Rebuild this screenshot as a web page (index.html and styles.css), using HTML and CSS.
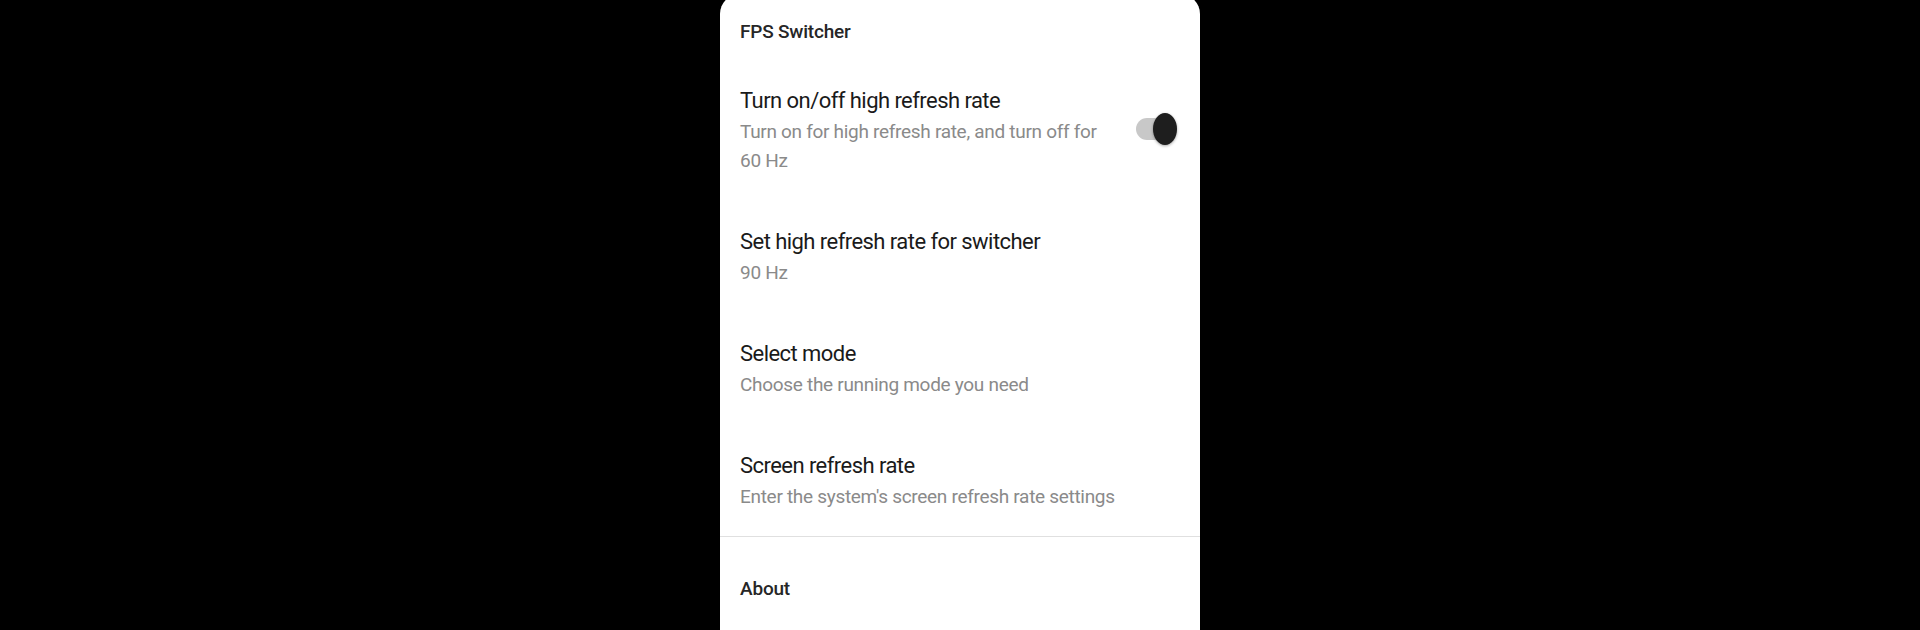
FILE: index.html
```html
<!DOCTYPE html>
<html lang="en">
<head>
<meta charset="utf-8">
<title>FPS Switcher</title>
<link rel="stylesheet" href="styles.css">
</head>
<body>
<main class="panel">
  <h2 class="section-title">FPS Switcher</h2>
  <div class="item">
    <div class="item-text item-text-narrow">
      <div class="item-title">Turn on/off high refresh rate</div>
      <div class="item-sub">Turn on for high refresh rate, and turn off for 60 Hz</div>
    </div>
    <div class="switch">
      <span class="switch-track"></span>
      <span class="switch-thumb"></span>
    </div>
  </div>
  <div class="item">
    <div class="item-text">
      <div class="item-title">Set high refresh rate for switcher</div>
      <div class="item-sub">90 Hz</div>
    </div>
  </div>
  <div class="item">
    <div class="item-text">
      <div class="item-title">Select mode</div>
      <div class="item-sub">Choose the running mode you need</div>
    </div>
  </div>
  <div class="item">
    <div class="item-text">
      <div class="item-title">Screen refresh rate</div>
      <div class="item-sub">Enter the system's screen refresh rate settings</div>
    </div>
  </div>
  <hr class="divider">
  <h2 class="section-title about">About</h2>
</main>
</body>
</html>
```
FILE: styles.css
```css
html, body {
  margin: 0;
  padding: 0;
  background: #000;
  height: 100%;
  overflow: hidden;
}

body {
  font-family: Roboto, "Noto Sans", "Liberation Sans", sans-serif;
}

.panel {
  width: 480px;
  margin: -6px auto 0;
  min-height: 700px;
  background: #fff;
  border-radius: 20px 20px 0 0;
}

.section-title {
  margin: 0;
  padding: 25px 20px 14px;
  font-size: 19px;
  line-height: 26px;
  font-weight: 500;
  letter-spacing: -0.2px;
  color: #262626;
}

.section-title.about {
  padding-top: 39px;
}

.item {
  display: flex;
  align-items: center;
  gap: 16px;
  padding: 27px 23px 25px 20px;
}

.item-text {
  flex: 1;
}

.item-text-narrow {
  max-width: 372px;
}

.item-title {
  font-size: 22px;
  line-height: 30px;
  letter-spacing: -0.55px;
  color: #1a1a1a;
}

.item-sub {
  margin-top: 1px;
  font-size: 19px;
  line-height: 29px;
  letter-spacing: -0.3px;
  color: #8a8a8a;
}

.switch {
  position: relative;
  width: 41px;
  height: 32px;
  margin-left: auto;
  margin-bottom: 4px;
  flex: none;
}

.switch-track {
  position: absolute;
  left: 0;
  top: 5px;
  width: 36px;
  height: 22px;
  border-radius: 11px;
  background: #c8c8c8;
}

.switch-thumb {
  position: absolute;
  right: 0;
  top: 0;
  width: 24px;
  height: 32px;
  border-radius: 50%;
  background: #1e1e1e;
  box-shadow: 0 1px 3px rgba(0, 0, 0, 0.35);
}

.divider {
  margin: 0;
  border: 0;
  border-top: 1px solid #e0e0e0;
}
```
